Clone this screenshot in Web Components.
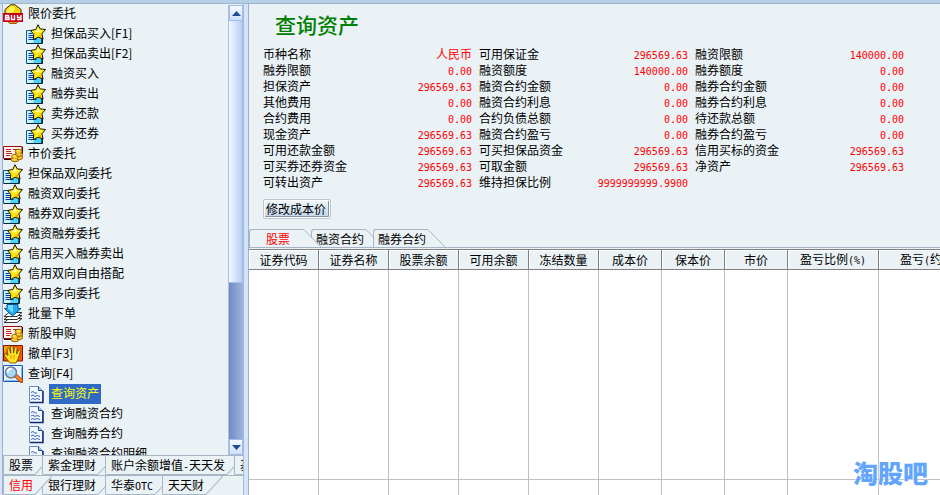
<!DOCTYPE html>
<html lang="zh-CN">
<head>
<meta charset="utf-8">
<title>查询资产</title>
<style>
html,body{height:100%;margin:0}
body{overflow:hidden;background:#eaf2f6;color:#000;font:12px/16px "Noto Sans CJK SC",sans-serif}
</style>
</head>
<body>
<trade-app></trade-app>

<script>
const define = (name, html, setup) => {
  const template = document.createElement('template');
  template.innerHTML = html;
  customElements.define(name, class extends HTMLElement {
    constructor() {
      super();
      this.attachShadow({ mode: 'open' }).append(template.content.cloneNode(true));
    }
    connectedCallback() { if (setup) setup(this, this.shadowRoot); }
  });
};

/* Half-width figures and Latin letters, six pixels to the character. */
define('half-width', `<style>:host{display:inline;font:10px/16px "DejaVu Sans Mono",monospace}</style><slot></slot>`);

const icons = {
  order: `<path d="M.5 6.500h15v13H.5z" fill="#c9f3ff" stroke="#0b5c8c"/><path d="M9 13h6v6H7z" fill="#4fd6f6"/><path d="M1 19.500h15.500V12" fill="none" stroke="#023"/><path d="M2.500 9.500h4M2.500 11.500h5M2.500 13.500h6M2.500 15.500h8" stroke="#0737a8"/><path d="M12 .7l2.200 4.200 5.300.6-3.600 4.300 1.200 5.200-5-1.800-4.700 2.500.3-5.400L4.500 6.500l5.300-1z" fill="#ffe712" stroke="#1b1600"/><path d="M12 3.200l1 3 3 .6-4.500 1.600-3.600-1.300 3-.4z" fill="#fffdb0"/><path d="M12 12l3.500 1.500-1-3.500z" fill="#f0aa00"/>`,
  buy: `<path d="M2 10V5.500L7.500.8h4.500L18 5.500V10z" fill="#ffd400" stroke="#402800"/><path d="M4 9V6l4.500-4H11l1 3-3 4z" fill="#fff45c"/><path d="M4 17h12l-3 2.500H7z" fill="#ff9b00" stroke="#603000" stroke-width=".7"/><path d="M0 9h20v9H0z" fill="#c30018"/><path d="M2.500 11v5M2 11.500h3.500v2H6v2H2M2 13.500h4M8.500 11v4.500h3V11M14.500 11v2.500h3.500V11M18 13v2.500h-4" fill="none" stroke="#fff" stroke-width="1.400"/>`,
  money: `<path d="M.5 2.500h18.500v12H.5z" fill="#fff6ef" stroke="#9c0c0c"/><path d="M1 15.500h10M19.500 3v7" stroke="#210"/><path d="M3 5.500h5M10 5.500h6M3 7.500h5M3 9.500h6M3 11.500h4" stroke="#c62222"/><g fill="#ffc51f" stroke="#805000" stroke-width=".8"><ellipse cx="12" cy="15.500" rx="4" ry="2.300"/><ellipse cx="16" cy="13.500" rx="3.500" ry="2.300"/><ellipse cx="12" cy="12.500" rx="3.500" ry="2.300"/><ellipse cx="16" cy="10" rx="3.500" ry="2.300"/><ellipse cx="15.500" cy="7.500" rx="3.500" ry="2.300"/></g><path d="M14 7h3M10 12h3M14 10h3M10 15h4" stroke="#fff17a"/>`,
  batch: `<g fill="#fff" stroke="#333"><path d="M1 18.500l5-4h13l-5 4z"/><path d="M1 15.500l5-4h13l-5 4z"/><path d="M1 12.500l5-4h13l-5 4z"/></g><path d="M4 .5h11v4h3l-8.500 7.500L1.500 4.500H4z" fill="#23a9ef" stroke="#06538c"/><path d="M5 1h5v8L4 4h1z" fill="#6cdaff"/>`,
  cancel: `<path d="M.5 1.500h19v15.500H.5z" fill="#ff5a00" stroke="#7c1a00"/><path d="M1 2h6L1 10z" fill="#ff9e00"/><path d="M6 18l-5-7c.6-1.800 2-1.400 4 .5L4 5c1-1.600 2-1.100 2.500.3l1.300 4L7.500 3c.8-1.500 2.400-1.300 2.700.1l.3 6 1.200-5.600c1-1.300 2.400-.7 2.400.7L13.500 10l2.200-4c1.300-.7 2 .2 1.800 1.600L15 15l-2 4H7z" fill="#ffe321" stroke="#604000" stroke-width=".8"/><path d="M8 11v4M11 11v4" stroke="#d79800"/>`,
  search: `<path d="M.5 1.500h19v16H.5z" fill="#eaf4ff" stroke="#1b59b8"/><path d="M2 16.500h17M18.500 3v14" stroke="#82b9f0"/><path d="M12 11l6.500 6" stroke="#b83400" stroke-width="4" stroke-linecap="round"/><path d="M12 11l6 5.500" stroke="#ff842a" stroke-width="2.500" stroke-linecap="round"/><circle cx="8" cy="8.500" r="5.500" fill="#a5daf9" stroke="#707b8c" stroke-width="1.500"/><path d="M4.500 8.500a3.800 3.800 0 0 1 4-3.800" fill="none" stroke="#fff" stroke-width="2"/>`,
  page: `<path d="M3.500 2.500h9l4 4v12h-13z" fill="#f1f7ff" stroke="#6c8bc4"/><path d="M12.500 2.500v4h4" fill="#a9c3ed" stroke="#2b4a96"/><path d="M17 7v11.500H4" fill="none" stroke="#122a71" stroke-width="1.500"/><path d="M5 8.500l2-1 2 1.500h2M5 12l2-1 2 1.500 2-1 3 1M5 15.500l2-1 2 1 2-1 3 1" fill="none" stroke="#3f64ae"/>`
};

define('tree-item', `<style>
:host{display:block}
button{display:flex;align-items:center;gap:3px;width:100%;height:20px;padding:0;border:0;background:none;font:inherit;color:inherit;white-space:nowrap;text-align:left}
:host([level="2"]) button{padding-left:23px}
svg{display:block;flex:none}
span{padding:0 2px 2px;line-height:18px}
:host([selected]) span{background:#316ac5;color:#ff0}
</style><button type="button"><svg viewBox="0 0 20 20" width="20" height="20" aria-hidden="true"></svg><span><slot></slot></span></button>`,
  (host, root) => { root.querySelector('svg').innerHTML = icons[host.getAttribute('icon')]; });

define('scroll-rail', `<style>
:host{display:flex;flex-direction:column;width:15px;flex:none;box-sizing:border-box;border-left:1px solid #a9bfe6;background:linear-gradient(90deg,#6f8cc2,#9db4dc)}
button{flex:none;height:16px;padding:0;border:1px solid #9fbbe8;background:linear-gradient(#f6faff,#cfdff9);display:grid;place-items:center}
.thumb{flex:262;background:linear-gradient(90deg,#f1f6ff,#dbe7fc 40%,#b7cdf3);border:1px solid #a6bfe9;border-width:0 1px 1px 0}
.rest{flex:156}
</style>
<button type="button" aria-label="向上滚动"><svg width="9" height="5"><path d="M0 5L4.500 0 9 5z" fill="#1f4b91"/></svg></button>
<div class="thumb"></div><div class="rest"></div>
<button type="button" aria-label="向下滚动"><svg width="9" height="5"><path d="M0 0l4.500 5L9 0z" fill="#1f4b91"/></svg></button>`);

define('tab-item', `<style>
:host{display:block;flex:none;margin-right:-10px;position:relative}
:host([selected]){z-index:1}
button{display:flex;height:18px;padding:0;border:0;background:none;color:inherit;font:inherit;white-space:nowrap}
:host([selected]) button{color:#f00}
span{box-sizing:border-box;height:18px;line-height:18px;padding:0 2px 0 4px;border:1px solid #a7b5c5;border-width:1px 0 0 1px;border-top-left-radius:3px;background:#eaf2f6}
:host([wide]) span{padding:0 14px 0 16px}
svg{display:block;flex:none}
:host([hanging]) button,:host([hanging]) span{height:19px}
:host([hanging]) span{border-width:0 0 1px 1px;border-radius:0 0 0 2px;padding:0 2px 0 5px}
:host([hanging]) svg{height:19px;transform:scaleY(-1)}
</style><button type="button" role="tab"><span><slot></slot></span><svg width="17" height="18" viewBox="0 0 17 18" preserveAspectRatio="none" aria-hidden="true"><path d="M0 .5L17 18H0z" fill="#eaf2f6"/><path d="M0 .5L17 18" fill="none" stroke="#a7b5c5"/></svg></button>`);

define('tab-strip', `<style>:host{display:flex;overflow:hidden}</style><slot></slot>`,
  host => host.setAttribute('role', 'tablist'));

define('menu-panel', `<style>
:host{display:flex;flex-direction:column;min-height:0;border-left:1px solid #a0b0c8;overflow:hidden}
.view{flex:1;min-height:0;display:flex}
nav{flex:1;min-width:0;overflow:hidden}
scroll-rail{margin-top:1px}
tab-strip{border-top:1px solid #a7b5c5;height:19px}
</style>
<div class="view"><nav>
<tree-item icon="buy">限价委托</tree-item>
<tree-item icon="order" level="2">担保品买入[F1]</tree-item>
<tree-item icon="order" level="2">担保品卖出[F2]</tree-item>
<tree-item icon="order" level="2">融资买入</tree-item>
<tree-item icon="order" level="2">融券卖出</tree-item>
<tree-item icon="order" level="2">卖券还款</tree-item>
<tree-item icon="order" level="2">买券还券</tree-item>
<tree-item icon="money">市价委托</tree-item>
<tree-item icon="order">担保品双向委托</tree-item>
<tree-item icon="order">融资双向委托</tree-item>
<tree-item icon="order">融券双向委托</tree-item>
<tree-item icon="order">融资融券委托</tree-item>
<tree-item icon="order">信用买入融券卖出</tree-item>
<tree-item icon="order">信用双向自由搭配</tree-item>
<tree-item icon="order">信用多向委托</tree-item>
<tree-item icon="batch">批量下单</tree-item>
<tree-item icon="money">新股申购</tree-item>
<tree-item icon="cancel">撤单[F3]</tree-item>
<tree-item icon="search">查询[F4]</tree-item>
<tree-item icon="page" level="2" selected>查询资产</tree-item>
<tree-item icon="page" level="2">查询融资合约</tree-item>
<tree-item icon="page" level="2">查询融券合约</tree-item>
<tree-item icon="page" level="2">查询融资合约明细</tree-item>
</nav><scroll-rail></scroll-rail></div>
<tab-strip><tab-item hanging>股票</tab-item><tab-item hanging>紫金理财</tab-item><tab-item hanging>账户余额增值<half-width>-</half-width>天天发</tab-item><tab-item hanging>基金</tab-item></tab-strip>
<tab-strip><tab-item hanging selected>信用</tab-item><tab-item hanging>银行理财</tab-item><tab-item hanging>华泰<half-width>OTC</half-width></tab-item><tab-item hanging>天天财</tab-item></tab-strip>`);

define('asset-item', `<style>
:host{display:flex;justify-content:space-between;height:16px;white-space:nowrap}
.value{color:#f00}
</style><span><slot></slot></span><span class="value"><slot name="value"></slot></span>`);

define('asset-summary', `<style>
:host{display:block;padding:6px 36px 10px 14px}
h1{margin:0 0 6px;padding-left:12px;font-size:21px;line-height:28px;padding-bottom:2px;font-weight:500;color:#008000}
.grid{display:grid;grid-template-columns:repeat(3,1fr);column-gap:7px}
button{display:block;margin-top:9px;padding:1px;height:20px;border:1px solid #bfc7cd;border-radius:2px;background:#fff;font:inherit;color:inherit}
button span{display:block;height:16px;box-sizing:border-box;line-height:15px;padding:0 2px 0 1px;border-right:1px solid #8295a5;border-bottom:1px solid #8295a5;background:linear-gradient(#eef5fb,#c6d9ea)}
</style><h1>查询资产</h1><div class="grid"></div><button type="button"><span>修改成本价</span></button>`,
  (host, root) => {
    const rows = [
      ['币种名称','人民币'],['可用保证金','296569.63'],['融资限额','140000.00'],
      ['融券限额','0.00'],['融资额度','140000.00'],['融券额度','0.00'],
      ['担保资产','296569.63'],['融资合约金额','0.00'],['融券合约金额','0.00'],
      ['其他费用','0.00'],['融资合约利息','0.00'],['融券合约利息','0.00'],
      ['合约费用','0.00'],['合约负债总额','0.00'],['待还款总额','0.00'],
      ['现金资产','296569.63'],['融资合约盈亏','0.00'],['融券合约盈亏','0.00'],
      ['可用还款金额','296569.63'],['可买担保品资金','296569.63'],['信用买标的资金','296569.63'],
      ['可买券还券资金','296569.63'],['可取金额','296569.63'],['净资产','296569.63'],
      ['可转出资产','296569.63'],['维持担保比例','9999999999.9900']
    ];
    root.querySelector('.grid').innerHTML = rows.map(([label, value]) =>
      `<asset-item>${label}${/\d/.test(value) ? `<half-width slot="value">${value}</half-width>` : `<span slot="value">${value}</span>`}</asset-item>`).join('');
  });

define('holdings-table', `<style>
:host{display:block;overflow:hidden;min-height:0;border-top:1px solid #808080;background:#fff}
table{table-layout:fixed;width:721px;height:100%;border-collapse:separate;border-spacing:0}
.w70{width:70px}.w63{width:63px}.w91{width:91px}
th{box-sizing:border-box;height:20px;padding:0;background:#eaf2f6;border-right:1px solid #808080;border-bottom:1px solid #808080;font-weight:400;line-height:18px;text-align:center;white-space:nowrap;box-shadow:inset 1px 1px #fff}
td{padding:0;border-right:1px solid #c0c0c0}
.fill td{border-bottom:1px solid #c0c0c0}
.next{height:15px}
</style><table><colgroup><col class="w70"><col class="w70"><col class="w70"><col class="w70"><col class="w70"><col class="w63"><col class="w63"><col class="w63"><col class="w91"><col class="w91"></colgroup>
<thead><tr><th>证券代码</th><th>证券名称</th><th>股票余额</th><th>可用余额</th><th>冻结数量</th><th>成本价</th><th>保本价</th><th>市价</th><th>盈亏比例<half-width>(%)</half-width></th><th>盈亏<half-width>(</half-width>约<half-width>)</half-width></th></tr></thead>
<tbody><tr class="fill"><td></td><td></td><td></td><td></td><td></td><td></td><td></td><td></td><td></td><td></td></tr>
<tr class="next"><td></td><td></td><td></td><td></td><td></td><td></td><td></td><td></td><td></td><td></td></tr></tbody></table>`);

define('site-mark', `<style>:host{position:absolute;right:12px;bottom:6px;font-size:25px;line-height:34px;font-weight:900;color:#62a5fa;text-shadow:0 0 2px #fff}</style><slot></slot>`);

define('trade-app', `<style>
:host{display:flex;flex-direction:column;height:100vh;position:relative;overflow:hidden}
header{flex:none;height:3px;background:#b5cfe6;border-bottom:1px solid #a2b3cd}
main{flex:1;min-height:0;display:grid;grid-template-columns:242px minmax(0,1fr);column-gap:4px;padding-left:2px;background:#d6e4fa}
menu-panel{background:#eaf2f6;border-right:1px solid #a3b9de}
section{min-width:0;min-height:0;display:flex;flex-direction:column;border-left:1px solid #a0b0c8;background:#eaf2f6}
tab-strip{border-bottom:1px solid #a7b5c5;margin-bottom:1px}
holdings-table{flex:1}
</style><header></header><main><menu-panel></menu-panel><section>
<asset-summary></asset-summary>
<tab-strip><tab-item wide selected>股票</tab-item><tab-item>融资合约</tab-item><tab-item>融券合约</tab-item></tab-strip>
<holdings-table></holdings-table></section></main><site-mark>淘股吧</site-mark>`);
</script>
</body>
</html>
